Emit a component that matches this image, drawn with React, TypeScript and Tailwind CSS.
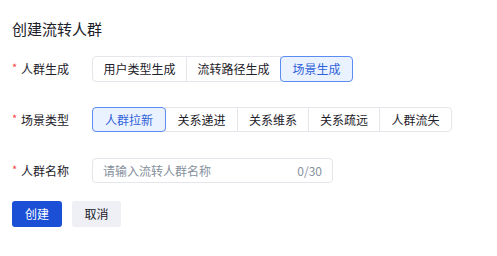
import { useState } from 'react';

const modes = ['用户类型生成', '流转路径生成', '场景生成'];
const scenes = ['人群拉新', '关系递进', '关系维系', '关系疏远', '人群流失'];

function Label({ text }: { text: string }) {
  return (
    <div className="flex w-[80px] shrink-0 items-center text-[12px] text-[#1d2129]">
      <span className="mr-[4px] w-[5px] text-[11px] leading-none text-[#f53f3f] -mt-[3px]">*</span>
      <span>{text}</span>
    </div>
  );
}

function Segmented({
  items,
  value,
  onChange,
  widths,
}: {
  items: string[];
  value: number;
  onChange: (i: number) => void;
  widths: string[];
}) {
  return (
    <div className="flex">
      {items.map((item, i) => {
        const active = i === value;
        return (
          <button
            key={item}
            onClick={() => onChange(i)}
            className={
              'relative -ml-px flex items-center justify-center border text-[12px] first:ml-0 first:rounded-l-[4px] last:rounded-r-[4px] ' +
              widths[i] +
              (active
                ? ' z-10 border-[#5b8cf2] bg-[#ebf2ff] text-[#2f62d8] rounded-[4px]'
                : ' border-[#e5e6eb] bg-white text-[#1d2129]')
            }
          >
            {item}
          </button>
        );
      })}
    </div>
  );
}

export default function App() {
  const [mode, setMode] = useState(2);
  const [scene, setScene] = useState(0);
  const [name, setName] = useState('');

  return (
    <div
      className="min-h-screen bg-white px-3 pt-[19px]"
      style={{ fontFamily: '"Noto Sans CJK SC", "Noto Sans", sans-serif' }}
    >
      <h1 className="h-5 text-[15px] leading-5 text-[#1d2129]">创建流转人群</h1>

      <div className="mt-[17px] flex h-[26px] items-stretch">
        <Label text="人群生成" />
        <Segmented
          items={modes}
          value={mode}
          onChange={setMode}
          widths={['w-[95px]', 'w-[95px]', 'w-[73px]']}
        />
      </div>

      <div className="mt-[25px] flex h-[25px] items-stretch">
        <Label text="场景类型" />
        <Segmented
          items={scenes}
          value={scene}
          onChange={setScene}
          widths={['w-[74px]', 'w-[73px]', 'w-[72px]', 'w-[72px]', 'w-[73px]']}
        />
      </div>

      <div className="mt-[26px] flex h-[25px] items-stretch">
        <Label text="人群名称" />
        <div className="flex w-[241px] items-center rounded-[4px] border border-[#e5e6eb] px-[10px] text-[12px]">
          <input
            value={name}
            maxLength={30}
            onChange={(e) => setName(e.target.value)}
            placeholder="请输入流转人群名称"
            className="min-w-0 flex-1 bg-transparent text-[#1d2129] outline-none placeholder:text-[#86909c]"
          />
          <span className="text-[#86909c]">{name.length}/30</span>
        </div>
      </div>

      <div className="mt-[18px] flex gap-[10px]">
        <button className="h-[26px] w-[50px] rounded-[3px] bg-[#1b4fd6] text-[12px] text-white">创建</button>
        <button className="h-[26px] w-[49px] rounded-[3px] bg-[#eef0f6] text-[12px] text-[#1d2129]">取消</button>
      </div>
    </div>
  );
}
